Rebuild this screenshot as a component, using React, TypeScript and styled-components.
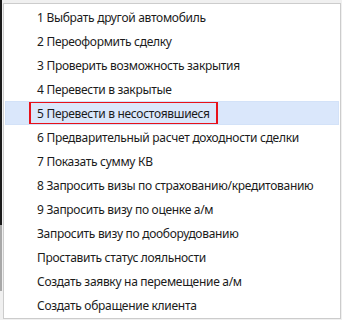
import React from 'react';
import styled, {createGlobalStyle} from "styled-components";

const GlobalStyle = createGlobalStyle`
  html, body {
    margin: 0;
    padding: 0;
    background: #f0f0f0;
  }
`

const Page = styled.div`
  display: flex;
  width: 342px;
  height: 320px;
  overflow: hidden;
  font-family: "Noto Sans", "Open Sans", sans-serif;
`

const WindowEdge = styled.div`
  display: flex;
  flex-direction: column;
  width: 2px;
  flex-shrink: 0;
`

const EdgeDark = styled.div`
  height: 225px;
  background: #1a1a1a;
`

const EdgeLight = styled.div`
  height: 66px;
  background: #a8a8a8;
`

const Menu = styled.div`
  margin: 3px 0 0 1px;
  width: 338px;
  height: 316px;
  box-sizing: border-box;
  background: #ffffff;
  border: 1px solid #cccccc;
  padding: 1px;
  display: flex;
  flex-direction: column;
  overflow: hidden;
`

const Row = styled.div<{ $active?: boolean }>`
  display: flex;
  align-items: stretch;
  height: 24px;
  flex-shrink: 0;
  padding-left: 24px;
  background: ${p => p.$active ? "#dae7fb" : "transparent"};
  outline: ${p => p.$active ? "1px solid #d3e2f8" : "none"};
  outline-offset: -1px;
`

const Label = styled.span<{ $outlined?: boolean }>`
  display: flex;
  align-items: center;
  box-sizing: border-box;
  padding: 0 6px;
  border: 2px solid ${p => p.$outlined ? "#e8111a" : "transparent"};
  font-size: 12px;
  letter-spacing: -0.3px;
  color: #1b1b1b;
  white-space: nowrap;
`

const items = [
    "1 Выбрать другой автомобиль",
    "2 Переоформить сделку",
    "3 Проверить возможность закрытия",
    "4 Перевести в закрытые",
    "5 Перевести в несостоявшиеся",
    "6 Предварительный расчет доходности сделки",
    "7 Показать сумму КВ",
    "8 Запросить визы по страхованию/кредитованию",
    "9 Запросить визу по оценке а/м",
    "Запросить визу по дооборудованию",
    "Проставить статус лояльности",
    "Создать заявку на перемещение а/м",
    "Создать обращение клиента",
];

const App = () => {
    return (
        <>
            <GlobalStyle/>
            <Page>
                <WindowEdge>
                    <EdgeDark/>
                    <EdgeLight/>
                </WindowEdge>
                <Menu>
                    {items.map((item, i) => (
                        <Row key={item} $active={i === 4}>
                            <Label $outlined={i === 4}>{item}</Label>
                        </Row>
                    ))}
                </Menu>
            </Page>
        </>
    );
}

export default App;
